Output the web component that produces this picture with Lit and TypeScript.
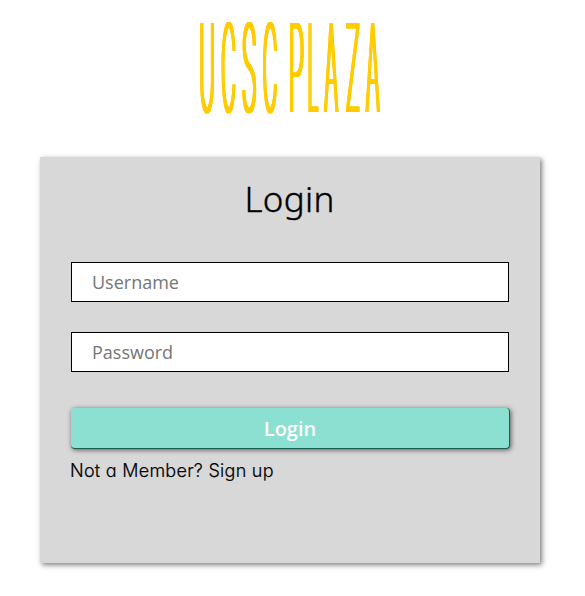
import { LitElement, html, css, svg } from "lit";
import { customElement } from "lit/decorators.js";

// One wordmark letter: left edge, target width, and the ink bounds at 122px.
interface Letter {
  char: string;
  x: number;
  width: number;
  inkLeft: number;
  inkWidth: number;
}

const LETTERS: Letter[] = [
  { char: "U", x: 1.5, width: 12, inkLeft: 13, inkWidth: 68 },
  { char: "C", x: 22.5, width: 12.5, inkLeft: 8, inkWidth: 76 },
  { char: "S", x: 43, width: 13, inkLeft: 8, inkWidth: 64 },
  { char: "C", x: 64, width: 12.5, inkLeft: 8, inkWidth: 76 },
  { char: "P", x: 91, width: 12.5, inkLeft: 13, inkWidth: 58 },
  { char: "L", x: 109.5, width: 8, inkLeft: 13, inkWidth: 50 },
  { char: "A", x: 125, width: 13.5, inkLeft: 4, inkWidth: 78 },
  { char: "Z", x: 147, width: 12.5, inkLeft: 8, inkWidth: 64 },
  { char: "A", x: 166.5, width: 13.5, inkLeft: 4, inkWidth: 78 },
];

@customElement("plaza-logo")
export class PlazaLogo extends LitElement {
  static styles = css`
    :host { display: block; width: 181px; height: 92px; }
    svg { display: block; overflow: visible; }
    text {
      font: 200 122px "Inter", sans-serif;
      fill: #ffcc00;
    }
  `;

  render() {
    return html`<svg width="181" height="92" viewBox="0 0 181 92" aria-label="UCSC PLAZA">
      <defs>
        <filter id="widen" x="-10" y="-10" width="201" height="112" filterUnits="userSpaceOnUse" color-interpolation-filters="sRGB">
          <feOffset in="SourceGraphic" dx="-1" dy="0" result="left"></feOffset>
          <feOffset in="SourceGraphic" dx="1" dy="0" result="right"></feOffset>
          <feMerge>
            <feMergeNode in="left"></feMergeNode>
            <feMergeNode in="left"></feMergeNode>
            <feMergeNode in="right"></feMergeNode>
            <feMergeNode in="right"></feMergeNode>
            <feMergeNode in="SourceGraphic"></feMergeNode>
            <feMergeNode in="SourceGraphic"></feMergeNode>
          </feMerge>
        </filter>
      </defs>
      <g filter="url(#widen)">
        ${LETTERS.map((l) => {
          const scale = l.width / l.inkWidth;
          return svg`<text transform="translate(${l.x - l.inkLeft * scale} 89.8) scale(${scale} 1)">${l.char}</text>`;
        })}
      </g>
    </svg>`;
  }
}

@customElement("app-root")
export class AppRoot extends LitElement {
  static styles = css`
    :host {
      display: flex;
      flex-direction: column;
      align-items: center;
      box-sizing: border-box;
      height: 596px;
      padding: 22px 5px 0 0;
      background: #fff;
      color: #000;
    }
    .card {
      box-sizing: border-box;
      width: 500px;
      height: 406px;
      margin-top: 43px;
      padding: 0 31px 0 30px;
      background: #d8d8d8;
      box-shadow: 2px 2px 5px rgba(0, 0, 0, 0.5);
    }
    form { display: flex; flex-direction: column; }
    h1 {
      margin: 0 0 21px;
      text-align: center;
      font: 300 35px/84px "Noto Sans", sans-serif;
      letter-spacing: 0.3px;
      -webkit-text-stroke: 0.4px #000;
    }
    input {
      box-sizing: border-box;
      width: 438px;
      height: 40px;
      margin: 0 0 30px 1px;
      padding: 0 20px;
      border: 1px solid #000;
      border-radius: 0;
      background: #fff;
      font: 400 18px "Open Sans", sans-serif;
      outline: none;
    }
    input::placeholder { color: #757575; opacity: 1; }
    button {
      box-sizing: border-box;
      width: 439px;
      height: 41px;
      margin: 6px 0 0 1px;
      padding: 1px 0 0;
      border: solid #1d5a4f;
      border-width: 0 1px 1px 0;
      border-radius: 4px;
      background: #8ce0d1;
      box-shadow: 1px 1px 5px rgba(0, 0, 0, 0.6);
      color: #fff;
      font: 600 20px "Open Sans", sans-serif;
    }
    .signup {
      margin: 8px 0 0;
      font: 300 18px/28px "Inter", sans-serif;
      font-feature-settings: "cv11";
      letter-spacing: 0.26px;
      -webkit-text-stroke: 0.2px #000;
      white-space: nowrap;
    }
  `;

  render() {
    return html`
      <plaza-logo></plaza-logo>
      <section class="card">
        <form @submit=${(e: Event) => e.preventDefault()}>
          <h1>Login</h1>
          <input type="text" placeholder="Username" />
          <input type="password" placeholder="Password" />
          <button type="submit">Login</button>
          <p class="signup">Not a Member? <span>Sign up</span></p>
        </form>
      </section>
    `;
  }
}
